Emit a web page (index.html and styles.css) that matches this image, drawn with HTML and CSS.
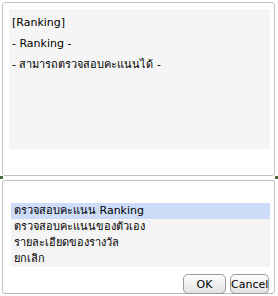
FILE: index.html
```html
<!DOCTYPE html>
<html lang="th">
<head>
    <meta charset="UTF-8">
    <title>Ranking</title>
    <link rel="stylesheet" href="styles.css">
</head>
<body>
    <div class="screen">
        <div class="panel info-panel">
            <div class="info-box">
                <p>[Ranking]</p>
                <p>- Ranking -</p>
                <p>- สามารถตรวจสอบคะแนนได้ -</p>
            </div>
        </div>

        <div class="divider">
            <span class="mark mark-left"></span>
            <span class="mark mark-right"></span>
        </div>

        <div class="panel menu-panel">
            <ul class="menu">
                <li class="selected">ตรวจสอบคะแนน Ranking</li>
                <li>ตรวจสอบคะแนนของตัวเอง</li>
                <li>รายละเอียดของรางวัล</li>
                <li>ยกเลิก</li>
            </ul>
            <div class="buttons">
                <button class="btn btn-ok">OK</button>
                <button class="btn">Cancel</button>
            </div>
        </div>
    </div>
</body>
</html>
```

FILE: styles.css
```css
body {
    margin: 0;
    padding: 0;
    background-color: #fff;
    font-family: "DejaVu Sans", sans-serif;
    font-size: 11px;
    color: #000;
}

.screen {
    position: relative;
    width: 278px;
    height: 296px;
    padding-top: 2px;
    box-sizing: border-box;
}

.panel {
    margin: 0 3px 0 2px;
    border: 1px solid #c4c4c4;
    border-radius: 3px;
    box-sizing: border-box;
}

.info-panel {
    height: 174px;
    padding: 6px 4px 0 6px;
}

.info-box {
    height: 140px;
    background-color: #f5f5f5;
    padding: 3px 3px;
    box-sizing: border-box;
}

.info-box p {
    margin: 0;
    height: 21px;
    line-height: 21px;
}

.divider {
    position: relative;
    height: 4px;
}

/* little green pins at the split */
.mark {
    position: absolute;
    top: 0;
    width: 3px;
    height: 3px;
    background-color: #4d6b2e;
}

.mark-left {
    left: 0;
}

.mark-right {
    right: 0;
}

.menu-panel {
    height: 114px;
    padding: 22px 4px 0 8px;
    border-bottom-color: #b8b8b8;
}

.menu {
    list-style: none;
    margin: 0;
    padding: 0;
    background-color: #f4f4f4;
}

.menu li {
    height: 16px;
    line-height: 16px;
    padding-left: 3px;
    white-space: nowrap;
}

.menu li.selected {
    background-color: #cddcf9;
}

.buttons {
    display: flex;
    justify-content: flex-end;
    gap: 4px;
    margin-top: 7px;
    margin-right: 1px;
}

.btn {
    height: 20px;
    padding: 0;
    font-family: "DejaVu Sans", sans-serif;
    font-size: 11px;
    color: #000;
    background: linear-gradient(#ffffff, #e2e2e2);
    border: 1px solid #9a9a9a;
    border-radius: 5px;
}

.btn-ok {
    width: 43px;
}

.btn:last-child {
    width: 39px;
}
```
